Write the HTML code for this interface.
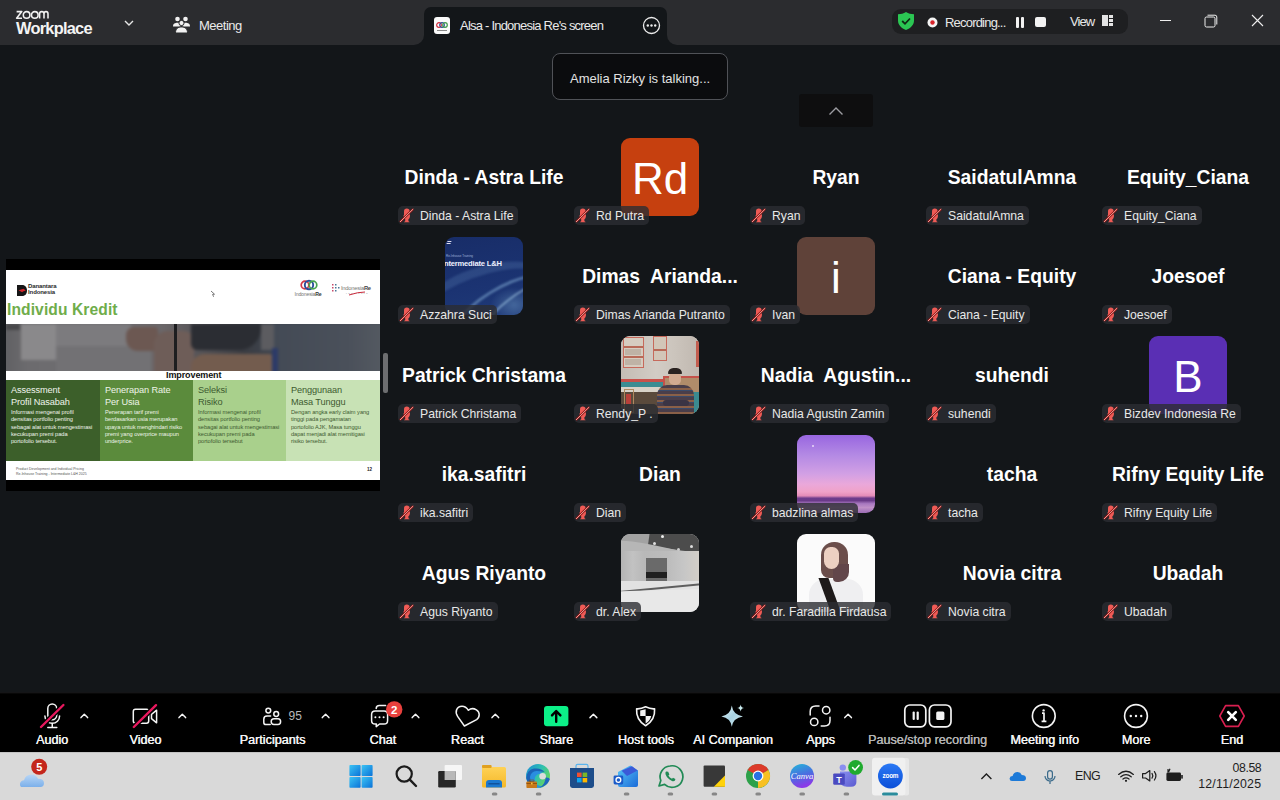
<!DOCTYPE html>
<html>
<head>
<meta charset="utf-8">
<style>
*{box-sizing:border-box;margin:0;padding:0}
html,body{width:1280px;height:800px;overflow:hidden;background:#131619;font-family:"Liberation Sans",sans-serif;color:#fff}
.a{position:absolute}
#title{left:0;top:0;width:1280px;height:45px;background:#2b2c2f}
#tab{left:424px;top:7px;width:243px;height:38px;background:#131619;border-radius:7px 7px 0 0}
#tabl{left:414px;top:35px;width:10px;height:10px;background:#131619}
#tabl:after{content:"";position:absolute;left:0;top:0;width:10px;height:10px;background:#2b2c2f;border-radius:0 0 10px 0}
#tabr{left:667px;top:35px;width:10px;height:10px;background:#131619}
#tabr:after{content:"";position:absolute;left:0;top:0;width:10px;height:10px;background:#2b2c2f;border-radius:0 0 0 10px}
#toolbar{left:0;top:692px;width:1280px;height:60px;background:linear-gradient(#151517 0,#151517 1px,#080808 1px,#080808 2px,#000 2px)}
#taskbar{left:0;top:752px;width:1280px;height:48px;background:#d9d9d9;border-top:1px solid #c4c4c4}
.tile{position:absolute;width:176px;height:99px}
.bn{position:absolute;left:0;width:176px;top:38.6px;text-align:center;font-weight:700;font-size:19.3px;line-height:22px;white-space:nowrap;color:#fff}
.av{position:absolute;left:49px;top:10px;width:78px;height:78px;border-radius:9px;overflow:hidden}
.chip{position:absolute;left:2px;top:78px;height:19px;border-radius:5px;background:rgba(44,45,50,0.8);padding:0 5px 0 22px;font-size:12.2px;line-height:21.5px;white-space:nowrap;color:#e8e8e8}
.chip svg{position:absolute;left:0;top:0}
.bx{white-space:nowrap}.bt{font-size:9.2px;line-height:11.5px;letter-spacing:-0.1px;margin-top:1px}.bb{font-size:5.7px;line-height:7.3px;margin-top:1px;letter-spacing:-0.05px}
.lt{text-align:center;font-size:44px;line-height:78px;padding-top:1.5px;color:#fff}.lt span{display:inline-block}
.lbl{position:absolute;top:733px;font-weight:400;font-size:12.6px;line-height:14px;white-space:nowrap;color:#f4f4f4;text-align:center;text-shadow:0.45px 0 0 currentColor}
</style>
</head>
<body>
<div id="title" class="a"></div>
<div id="tabl" class="a"></div>
<div id="tabr" class="a"></div>
<div id="tab" class="a"></div>
<svg class="a" style="left:15px;top:9px" width="34" height="11" viewBox="0 0 34 11"><g fill="none" stroke="#f2f2f2" stroke-width="1.55"><path d="M1.6 2.6 L6.8 2.6 L1.6 9.2 L7 9.2" stroke-linejoin="round"/><circle cx="11.6" cy="5.9" r="3.3"/><circle cx="19.8" cy="5.9" r="3.3"/><path d="M24.6 9.6 L24.6 4.8 Q24.6 2.6 26.8 2.6 Q29 2.6 29 4.8 L29 9.6 M29 4.8 Q29 2.6 31 2.6 Q33 2.6 33 4.8 L33 9.6"/></g></svg>
<div class="a" style="left:16px;top:18px;font-size:16.4px;font-weight:700;letter-spacing:-0.75px;line-height:20px;color:#f4f4f4">Workplace</div>
<svg class="a" style="left:123px;top:18px" width="12" height="10" viewBox="0 0 12 10"><path d="M2 3 L6 7 L10 3" fill="none" stroke="#e6e6e6" stroke-width="1.4"/></svg>
<svg class="a" style="left:172px;top:16px" width="19" height="18" viewBox="0 0 19 18"><circle cx="5.5" cy="3" r="2.3" fill="#f2f2f2"/><circle cx="13.5" cy="3" r="2.3" fill="#f2f2f2"/><path d="M1 10.5 C1 7.5 3 6.8 5.5 6.8 C7 6.8 8 7.2 8.5 7.8 L8.5 10.5 Z" fill="#f2f2f2"/><path d="M18 10.5 C18 7.5 16 6.8 13.5 6.8 C12 6.8 11 7.2 10.5 7.8 L10.5 10.5 Z" fill="#f2f2f2"/><circle cx="9.5" cy="7" r="2.6" fill="#f2f2f2" stroke="#2b2c2f" stroke-width="1"/><path d="M3.5 17 C3.5 12.5 6 11 9.5 11 C13 11 15.5 12.5 15.5 17 Z" fill="#f2f2f2" stroke="#2b2c2f" stroke-width="1"/></svg>
<div class="a" style="left:199px;top:18px;font-size:13px;letter-spacing:-0.5px;line-height:16px;color:#eaeaea">Meeting</div>
<svg class="a" style="left:434px;top:17px" width="16" height="17" viewBox="0 0 16 17"><rect x="0" y="0" width="16" height="17" rx="3" fill="#fafafa"/><circle cx="5" cy="8" r="2.3" fill="none" stroke="#d02a3a" stroke-width="1.2"/><circle cx="8" cy="8" r="2.3" fill="none" stroke="#2a4d9a" stroke-width="1.2"/><circle cx="11" cy="8" r="2.3" fill="none" stroke="#3f9a4a" stroke-width="1.2"/><rect x="3" y="13" width="10" height="1" fill="#888"/></svg>
<div class="a" style="left:460px;top:18px;font-size:13px;letter-spacing:-0.78px;line-height:16px;color:#eaeaea">Alsa - Indonesia Re's screen</div>
<svg class="a" style="left:642px;top:16px" width="19" height="19" viewBox="0 0 19 19"><circle cx="9.5" cy="9.5" r="8" fill="none" stroke="#ececec" stroke-width="1.3"/><circle cx="5.8" cy="9.5" r="1.2" fill="#ececec"/><circle cx="9.5" cy="9.5" r="1.2" fill="#ececec"/><circle cx="13.2" cy="9.5" r="1.2" fill="#ececec"/></svg>
<!-- recording pill -->
<div class="a" style="left:892px;top:9px;width:236px;height:25px;border-radius:9px;background:#1e1f21"></div>
<svg class="a" style="left:897px;top:11px" width="18" height="20" viewBox="0 0 18 20"><path d="M9 1 C11.5 2.6 14 3.2 17 3.3 L17 9.5 C17 14 13.5 17.2 9 19 C4.5 17.2 1 14 1 9.5 L1 3.3 C4 3.2 6.5 2.6 9 1 Z" fill="#2bc653"/><path d="M5.2 10 L8 12.8 L13 7.5" fill="none" stroke="#0f2a14" stroke-width="1.8"/></svg>
<svg class="a" style="left:927px;top:17px" width="11" height="11" viewBox="0 0 11 11"><circle cx="5.5" cy="5.5" r="5" fill="#f4f4f4"/><circle cx="5.5" cy="5.5" r="2.2" fill="#d8232a"/></svg>
<div class="a" style="left:945px;top:15px;font-size:13px;letter-spacing:-0.8px;line-height:16px;color:#e8e8e8">Recording...</div>
<div class="a" style="left:1016px;top:16.5px;width:3px;height:11px;background:#f2f2f2;border-radius:1px"></div>
<div class="a" style="left:1021px;top:16.5px;width:3px;height:11px;background:#f2f2f2;border-radius:1px"></div>
<div class="a" style="left:1035px;top:17px;width:11px;height:10px;background:#f2f2f2;border-radius:2px"></div>
<div class="a" style="left:1070px;top:14px;font-size:13px;letter-spacing:-0.9px;line-height:16px;color:#e8e8e8">View</div>
<div class="a" style="left:1102px;top:15px;width:6px;height:11px;background:#e4e4e4"></div>
<div class="a" style="left:1109px;top:15px;width:4px;height:3px;background:#e4e4e4"></div>
<div class="a" style="left:1109px;top:19px;width:4px;height:3px;background:#e4e4e4"></div>
<div class="a" style="left:1109px;top:23px;width:4px;height:3px;background:#e4e4e4"></div>
<!-- window controls -->
<div class="a" style="left:1160px;top:20px;width:11px;height:1.2px;background:#efefef"></div>
<svg class="a" style="left:1204px;top:14px" width="14" height="14" viewBox="0 0 14 14"><rect x="1" y="3" width="10" height="10" rx="1.5" fill="none" stroke="#efefef" stroke-width="1"/><path d="M3.5 1.2 L11 1.2 Q12.8 1.2 12.8 3 L12.8 10.5" fill="none" stroke="#efefef" stroke-width="1"/></svg>
<svg class="a" style="left:1251px;top:14px" width="13" height="13" viewBox="0 0 13 13"><path d="M1 1 L12 12 M12 1 L1 12" stroke="#efefef" stroke-width="1.1"/></svg>
<!-- talking tooltip -->
<div class="a" style="left:552px;top:53px;width:176px;height:47px;border-radius:8px;background:#0b0c0e;border:1px solid #505257"></div>
<div class="a" style="left:570px;top:70.8px;font-size:13px;line-height:16px;color:#e2e2e2;letter-spacing:0px">Amelia Rizky is talking...</div>
<!-- up button -->
<div class="a" style="left:799px;top:94px;width:74px;height:33px;border-radius:3px;background:#0e0e0f"></div>
<svg class="a" style="left:828px;top:105px" width="16" height="12" viewBox="0 0 16 12"><path d="M1.5 9.5 L8 3 L14.5 9.5" fill="none" stroke="#9d9da2" stroke-width="1.4"/></svg>
<div class="a" style="left:6px;top:259px;width:374px;height:232px;background:#000"></div>
<div class="a" style="left:6px;top:270px;width:374px;height:210px;background:#fff;overflow:hidden">
 <!-- header logos -->
 <svg class="a" style="left:11px;top:15px" width="10" height="11" viewBox="0 0 10 11"><path d="M0 0 L5 0 C8.5 0 10 2.5 10 5.5 C10 8.5 8.5 11 5 11 L0 11 Z" fill="#161616"/><path d="M1.5 5.2 L6.5 3.8 L8.8 5.4 L6 6.4 L5.2 7.2 Z" fill="#d3242a"/></svg>
 <div class="a" style="left:22px;top:14px;font-size:6px;line-height:5.8px;font-weight:700;color:#2a2a2a;letter-spacing:-0.1px">Danantara<br>Indonesia</div>
 <div class="a" style="left:1px;top:31px;font-size:15.6px;line-height:18px;font-weight:700;color:#6fad4b;letter-spacing:0.1px">Individu Kredit</div>
 <svg class="a" style="left:204px;top:20px" width="6" height="8" viewBox="0 0 6 8"><path d="M1 1 L4.5 4.2 L2.6 4.4 L3.6 6.8" fill="none" stroke="#555" stroke-width="0.8"/></svg>
 <svg class="a" style="left:286px;top:9px" width="36" height="20" viewBox="0 0 36 20"><circle cx="13" cy="6" r="3.8" fill="none" stroke="#d23a4a" stroke-width="1.7"/><circle cx="17" cy="6" r="4.2" fill="none" stroke="#2a4d9a" stroke-width="1.9"/><circle cx="21" cy="6" r="3.8" fill="none" stroke="#4aa34f" stroke-width="1.7"/><text x="2.5" y="17" font-size="5.2" font-family="Liberation Sans" fill="#777" letter-spacing="-0.2">Indonesia<tspan font-weight="700" fill="#333">Re</tspan></text></svg>
 <svg class="a" style="left:326px;top:13px" width="44" height="16" viewBox="0 0 44 16"><g fill="#c84a6a"><rect x="0" y="1" width="1.5" height="1.5"/><rect x="0" y="4" width="1.5" height="1.5"/><rect x="0" y="7" width="1.5" height="1.5"/></g><g fill="#4a7a9a"><rect x="3" y="1" width="1.5" height="1.5"/><rect x="3" y="4" width="1.5" height="1.5"/><rect x="3" y="7" width="1.5" height="1.5"/><rect x="6" y="4" width="1.5" height="1.5"/></g><text x="9" y="7" font-size="5.8" font-family="Liberation Sans" fill="#777" letter-spacing="-0.25">Indonesia<tspan font-weight="700" fill="#444">Re</tspan></text><text x="14" y="10.5" font-size="2.5" font-family="Liberation Sans" fill="#777" letter-spacing="1.6">Institute</text><path d="M17 12 Q26 9 33 9" stroke="#c8283a" stroke-width="1" fill="none"/></svg>
 <!-- photo -->
 <div class="a" style="left:0;top:54px;width:374px;height:47px;overflow:hidden;background:#5a5a5d">
  <div class="a" style="left:-10px;top:-10px;width:400px;height:70px;filter:blur(1.8px)">
   <div class="a" style="left:0;top:0;width:400px;height:70px;background:linear-gradient(90deg,#5c5c5f 0%,#6c6b6e 8%,#6e6d70 30%,#6a6668 42%,#3a3c42 62%,#3e4550 70%,#444a54 90%,#50565e 100%)"></div>
   <div class="a" style="left:10px;top:10px;width:14px;height:6px;background:#48484a"></div>
   <div class="a" style="left:25px;top:10px;width:35px;height:36px;background:#8a898b"></div>
   <div class="a" style="left:60px;top:10px;width:75px;height:22px;background:#7c7b7e"></div>
   <div class="a" style="left:60px;top:32px;width:95px;height:38px;background:#727174"></div>
   <div class="a" style="left:130px;top:13px;width:32px;height:24px;border-radius:8px 4px 4px 12px;background:#6c5852"></div>
   <div class="a" style="left:158px;top:17px;width:40px;height:53px;border-radius:14px 10px 0 0;background:#6e5d58"></div>
   <div class="a" style="left:195px;top:10px;width:70px;height:26px;border-radius:0 0 22px 6px;background:#2b2d33"></div>
   <div class="a" style="left:265px;top:10px;width:14px;height:26px;background:#5c5c60"></div>
   <div class="a" style="left:195px;top:40px;width:82px;height:30px;border-radius:14px 4px 0 0;background:#735c4e"></div>
   <div class="a" style="left:278px;top:10px;width:122px;height:60px;background:linear-gradient(90deg,#434a55 0%,#4a505a 60%,#585d64 100%)"></div>
   <div class="a" style="left:276px;top:34px;width:6px;height:36px;background:#2c3a68"></div>
  </div>
  <div class="a" style="left:168px;top:0;width:3px;height:47px;background:#1e1e20;filter:blur(0.4px)"></div>
 </div>
 <!-- improvement -->
 <div class="a" style="left:160px;top:100px;font-size:9px;line-height:11px;font-weight:700;color:#111;letter-spacing:-0.1px">Improvement</div>
 <div class="a" style="left:0;top:110px;width:94px;height:81px;background:#3c5f2a"></div>
 <div class="a" style="left:94px;top:110px;width:93px;height:81px;background:#5b8b3c"></div>
 <div class="a" style="left:187px;top:110px;width:93px;height:81px;background:#a9d08c"></div>
 <div class="a" style="left:280px;top:110px;width:94px;height:81px;background:#c8e2b5"></div>
 <div class="a bx" style="left:5px;top:114px;color:#f0f4ec"><div class="bt">Assessment<br>Profil Nasabah</div><div class="bb">Informasi mengenai profil<br>densitas portfolio penting<br>sebagai alat untuk mengestimasi<br>kecukupan premi pada<br>portofolio tersebut.</div></div>
 <div class="a bx" style="left:99px;top:114px;color:#eef4e8"><div class="bt">Penerapan Rate<br>Per Usia</div><div class="bb">Penerapan tarif premi<br>berdasarkan usia merupakan<br>upaya untuk menghindari risiko<br>premi yang overprice maupun<br>underprice.</div></div>
 <div class="a bx" style="left:192px;top:114px;color:#3d5a30"><div class="bt">Seleksi<br>Risiko</div><div class="bb">Informasi mengenai profil<br>densitas portfolio penting<br>sebagai alat untuk mengestimasi<br>kecukupan premi pada<br>portofolio tersebut</div></div>
 <div class="a bx" style="left:285px;top:114px;color:#3d5a30"><div class="bt">Penggunaan<br>Masa Tunggu</div><div class="bb">Dengan angka early claim yang<br>tinggi pada pengamatan<br>portofolio AJK, Masa tunggu<br>dapat menjadi alat memitigasi<br>risiko tersebut.</div></div>
 <div class="a" style="left:10px;top:197px;font-size:3.5px;line-height:4.5px;color:#555">Product Development and Individual Pricing<br>Re-Inhouse Training - Intermediate L&amp;H 2025</div>
 <div class="a" style="left:361px;top:197px;font-size:4.5px;line-height:5px;color:#222;font-weight:700">12</div>
</div>
<div class="a" style="left:383px;top:353px;width:5px;height:40px;border-radius:2px;background:#6d6e70"></div>
<!--GRID-->
<div class="tile" style="left:396px;top:128px"><div class="bn">Dinda - Astra Life</div><div class="chip"><svg width="18" height="19" viewBox="0 0 18 19"><rect x="6" y="2.6" width="5.6" height="8.6" rx="2.8" fill="#ef5b56"/><path d="M5.6 9 Q5.6 12.6 7.2 13.2 L7.2 15.2 Q6 15.6 6 16.2 L11.6 16.2 Q11.6 15.6 10.4 15.2 L10.4 13.2 Q12 12.6 12 9 Z" fill="#ef5b56"/><path d="M2 16 L15.2 3" stroke="#8e1616" stroke-width="2.3"/><path d="M2 16 L15.2 3" stroke="#f7b0a8" stroke-width="0.9"/></svg>Dinda - Astra Life</div></div>
<div class="tile" style="left:572px;top:128px"><div class="av lt" style="background:#c6400f"><span>Rd</span></div><div class="chip"><svg width="18" height="19" viewBox="0 0 18 19"><rect x="6" y="2.6" width="5.6" height="8.6" rx="2.8" fill="#ef5b56"/><path d="M5.6 9 Q5.6 12.6 7.2 13.2 L7.2 15.2 Q6 15.6 6 16.2 L11.6 16.2 Q11.6 15.6 10.4 15.2 L10.4 13.2 Q12 12.6 12 9 Z" fill="#ef5b56"/><path d="M2 16 L15.2 3" stroke="#8e1616" stroke-width="2.3"/><path d="M2 16 L15.2 3" stroke="#f7b0a8" stroke-width="0.9"/></svg>Rd Putra</div></div>
<div class="tile" style="left:748px;top:128px"><div class="bn">Ryan</div><div class="chip"><svg width="18" height="19" viewBox="0 0 18 19"><rect x="6" y="2.6" width="5.6" height="8.6" rx="2.8" fill="#ef5b56"/><path d="M5.6 9 Q5.6 12.6 7.2 13.2 L7.2 15.2 Q6 15.6 6 16.2 L11.6 16.2 Q11.6 15.6 10.4 15.2 L10.4 13.2 Q12 12.6 12 9 Z" fill="#ef5b56"/><path d="M2 16 L15.2 3" stroke="#8e1616" stroke-width="2.3"/><path d="M2 16 L15.2 3" stroke="#f7b0a8" stroke-width="0.9"/></svg>Ryan</div></div>
<div class="tile" style="left:924px;top:128px"><div class="bn">SaidatulAmna</div><div class="chip"><svg width="18" height="19" viewBox="0 0 18 19"><rect x="6" y="2.6" width="5.6" height="8.6" rx="2.8" fill="#ef5b56"/><path d="M5.6 9 Q5.6 12.6 7.2 13.2 L7.2 15.2 Q6 15.6 6 16.2 L11.6 16.2 Q11.6 15.6 10.4 15.2 L10.4 13.2 Q12 12.6 12 9 Z" fill="#ef5b56"/><path d="M2 16 L15.2 3" stroke="#8e1616" stroke-width="2.3"/><path d="M2 16 L15.2 3" stroke="#f7b0a8" stroke-width="0.9"/></svg>SaidatulAmna</div></div>
<div class="tile" style="left:1100px;top:128px"><div class="bn">Equity_Ciana</div><div class="chip"><svg width="18" height="19" viewBox="0 0 18 19"><rect x="6" y="2.6" width="5.6" height="8.6" rx="2.8" fill="#ef5b56"/><path d="M5.6 9 Q5.6 12.6 7.2 13.2 L7.2 15.2 Q6 15.6 6 16.2 L11.6 16.2 Q11.6 15.6 10.4 15.2 L10.4 13.2 Q12 12.6 12 9 Z" fill="#ef5b56"/><path d="M2 16 L15.2 3" stroke="#8e1616" stroke-width="2.3"/><path d="M2 16 L15.2 3" stroke="#f7b0a8" stroke-width="0.9"/></svg>Equity_Ciana</div></div>
<div class="tile" style="left:396px;top:227px"><div class="av" style="background:linear-gradient(170deg,#182d68 0%,#1b3372 60%,#1f3a78 100%)"><div class="a" style="left:0;top:0;width:78px;height:78px;filter:blur(0.8px)"><div class="a" style="left:-40px;top:30px;width:160px;height:90px;border-radius:50%;border-top:9px solid rgba(110,150,200,.22);transform:rotate(-20deg)"></div><div class="a" style="left:-5px;top:50px;width:130px;height:60px;border-radius:50%;border-top:3px solid rgba(150,195,230,.45);transform:rotate(-32deg)"></div><div class="a" style="left:25px;top:58px;width:100px;height:40px;border-radius:50%;border-top:2px solid rgba(190,225,245,.55);transform:rotate(-38deg)"></div><div class="a" style="left:45px;top:50px;width:40px;height:30px;background:radial-gradient(ellipse at 60% 60%,rgba(140,190,225,.35),rgba(140,190,225,0) 70%)"></div></div><div class="a" style="left:1px;top:17px;font-size:3px;color:#9fb0d8;white-space:nowrap">Re-Inhouse Training</div><div class="a" style="left:-1px;top:22px;font-size:7.6px;font-weight:700;color:#eef2ff;white-space:nowrap;letter-spacing:-0.2px">ntermediate L&amp;H</div><div class="a" style="left:2px;top:4px;width:4px;height:3px;border-top:1px solid #dde;border-bottom:1px solid #dde;transform:skewX(-20deg)"></div></div><div class="chip"><svg width="18" height="19" viewBox="0 0 18 19"><rect x="6" y="2.6" width="5.6" height="8.6" rx="2.8" fill="#ef5b56"/><path d="M5.6 9 Q5.6 12.6 7.2 13.2 L7.2 15.2 Q6 15.6 6 16.2 L11.6 16.2 Q11.6 15.6 10.4 15.2 L10.4 13.2 Q12 12.6 12 9 Z" fill="#ef5b56"/><path d="M2 16 L15.2 3" stroke="#8e1616" stroke-width="2.3"/><path d="M2 16 L15.2 3" stroke="#f7b0a8" stroke-width="0.9"/></svg>Azzahra Suci</div></div>
<div class="tile" style="left:572px;top:227px"><div class="bn">Dimas&nbsp; Arianda...</div><div class="chip"><svg width="18" height="19" viewBox="0 0 18 19"><rect x="6" y="2.6" width="5.6" height="8.6" rx="2.8" fill="#ef5b56"/><path d="M5.6 9 Q5.6 12.6 7.2 13.2 L7.2 15.2 Q6 15.6 6 16.2 L11.6 16.2 Q11.6 15.6 10.4 15.2 L10.4 13.2 Q12 12.6 12 9 Z" fill="#ef5b56"/><path d="M2 16 L15.2 3" stroke="#8e1616" stroke-width="2.3"/><path d="M2 16 L15.2 3" stroke="#f7b0a8" stroke-width="0.9"/></svg>Dimas Arianda Putranto</div></div>
<div class="tile" style="left:748px;top:227px"><div class="av lt" style="background:#5f4239"><span>i</span></div><div class="chip"><svg width="18" height="19" viewBox="0 0 18 19"><rect x="6" y="2.6" width="5.6" height="8.6" rx="2.8" fill="#ef5b56"/><path d="M5.6 9 Q5.6 12.6 7.2 13.2 L7.2 15.2 Q6 15.6 6 16.2 L11.6 16.2 Q11.6 15.6 10.4 15.2 L10.4 13.2 Q12 12.6 12 9 Z" fill="#ef5b56"/><path d="M2 16 L15.2 3" stroke="#8e1616" stroke-width="2.3"/><path d="M2 16 L15.2 3" stroke="#f7b0a8" stroke-width="0.9"/></svg>Ivan</div></div>
<div class="tile" style="left:924px;top:227px"><div class="bn">Ciana - Equity</div><div class="chip"><svg width="18" height="19" viewBox="0 0 18 19"><rect x="6" y="2.6" width="5.6" height="8.6" rx="2.8" fill="#ef5b56"/><path d="M5.6 9 Q5.6 12.6 7.2 13.2 L7.2 15.2 Q6 15.6 6 16.2 L11.6 16.2 Q11.6 15.6 10.4 15.2 L10.4 13.2 Q12 12.6 12 9 Z" fill="#ef5b56"/><path d="M2 16 L15.2 3" stroke="#8e1616" stroke-width="2.3"/><path d="M2 16 L15.2 3" stroke="#f7b0a8" stroke-width="0.9"/></svg>Ciana - Equity</div></div>
<div class="tile" style="left:1100px;top:227px"><div class="bn">Joesoef</div><div class="chip"><svg width="18" height="19" viewBox="0 0 18 19"><rect x="6" y="2.6" width="5.6" height="8.6" rx="2.8" fill="#ef5b56"/><path d="M5.6 9 Q5.6 12.6 7.2 13.2 L7.2 15.2 Q6 15.6 6 16.2 L11.6 16.2 Q11.6 15.6 10.4 15.2 L10.4 13.2 Q12 12.6 12 9 Z" fill="#ef5b56"/><path d="M2 16 L15.2 3" stroke="#8e1616" stroke-width="2.3"/><path d="M2 16 L15.2 3" stroke="#f7b0a8" stroke-width="0.9"/></svg>Joesoef</div></div>
<div class="tile" style="left:396px;top:326px"><div class="bn">Patrick Christama</div><div class="chip"><svg width="18" height="19" viewBox="0 0 18 19"><rect x="6" y="2.6" width="5.6" height="8.6" rx="2.8" fill="#ef5b56"/><path d="M5.6 9 Q5.6 12.6 7.2 13.2 L7.2 15.2 Q6 15.6 6 16.2 L11.6 16.2 Q11.6 15.6 10.4 15.2 L10.4 13.2 Q12 12.6 12 9 Z" fill="#ef5b56"/><path d="M2 16 L15.2 3" stroke="#8e1616" stroke-width="2.3"/><path d="M2 16 L15.2 3" stroke="#f7b0a8" stroke-width="0.9"/></svg>Patrick Christama</div></div>
<div class="tile" style="left:572px;top:326px"><div class="av" style="background:#cdc6be"><div class="a" style="left:0;top:0;width:78px;height:78px;filter:blur(0.5px)"><div class="a" style="left:0;top:0;width:78px;height:46px;background:linear-gradient(90deg,#c4bcb4,#d2ccc5 45%,#cbc4bc 70%,#c0b8b0)"></div><div class="a" style="left:2px;top:1px;width:21px;height:31px;border:1.5px solid #c66a5c;background:#d6ccc0"></div><div class="a" style="left:3px;top:10px;width:19px;height:1.5px;background:#b86a58"></div><div class="a" style="left:3px;top:20px;width:19px;height:1.5px;background:#b86a58"></div><div class="a" style="left:4px;top:13px;width:16px;height:6px;background:#a89a8c;opacity:.5"></div><div class="a" style="left:4px;top:23px;width:16px;height:6px;background:#a89a8c;opacity:.5"></div><div class="a" style="left:32px;top:0;width:14px;height:25px;border:1.5px solid #c66a5c;background:#d2c6b8"></div><div class="a" style="left:33px;top:13px;width:12px;height:1.5px;background:#b86a58"></div><div class="a" style="left:75px;top:5px;width:3px;height:26px;background:#c25c4e"></div><div class="a" style="left:0;top:43px;width:42px;height:3px;background:#c8504a"></div><div class="a" style="left:0;top:46px;width:42px;height:5px;background:#3b8c92"></div><div class="a" style="left:0;top:51px;width:42px;height:5px;background:#d8d2c8"></div><div class="a" style="left:0;top:56px;width:42px;height:22px;background:#5a4a3c"></div><div class="a" style="left:3px;top:53px;width:10px;height:24px;border:1.5px solid #b08a60"></div><div class="a" style="left:5px;top:58px;width:5px;height:10px;background:#b8403a"></div><div class="a" style="left:42px;top:40px;width:36px;height:22px;background:#b08c6a;border-top:2px solid #c4524a;border-left:2px solid #c4524a"></div><div class="a" style="left:72px;top:56px;width:6px;height:22px;background:#3a8a90"></div><div class="a" style="left:48px;top:35px;width:12px;height:14px;border-radius:6px 6px 5px 5px;background:#d2aa90"></div><div class="a" style="left:47px;top:32px;width:14px;height:6px;border-radius:7px 7px 1px 1px;background:#2a2220"></div><div class="a" style="left:36px;top:49px;width:37px;height:29px;border-radius:10px 10px 0 0;background:repeating-linear-gradient(180deg,#4a3e4a 0,#4a3e4a 3px,#8a6048 3px,#8a6048 4.5px,#3a4a6a 4.5px,#3a4a6a 6px)"></div><div class="a" style="left:42px;top:64px;width:26px;height:6px;border-radius:3px;background:#3a3444"></div></div></div><div class="chip"><svg width="18" height="19" viewBox="0 0 18 19"><rect x="6" y="2.6" width="5.6" height="8.6" rx="2.8" fill="#ef5b56"/><path d="M5.6 9 Q5.6 12.6 7.2 13.2 L7.2 15.2 Q6 15.6 6 16.2 L11.6 16.2 Q11.6 15.6 10.4 15.2 L10.4 13.2 Q12 12.6 12 9 Z" fill="#ef5b56"/><path d="M2 16 L15.2 3" stroke="#8e1616" stroke-width="2.3"/><path d="M2 16 L15.2 3" stroke="#f7b0a8" stroke-width="0.9"/></svg>Rendy_P .</div></div>
<div class="tile" style="left:748px;top:326px"><div class="bn">Nadia&nbsp; Agustin...</div><div class="chip"><svg width="18" height="19" viewBox="0 0 18 19"><rect x="6" y="2.6" width="5.6" height="8.6" rx="2.8" fill="#ef5b56"/><path d="M5.6 9 Q5.6 12.6 7.2 13.2 L7.2 15.2 Q6 15.6 6 16.2 L11.6 16.2 Q11.6 15.6 10.4 15.2 L10.4 13.2 Q12 12.6 12 9 Z" fill="#ef5b56"/><path d="M2 16 L15.2 3" stroke="#8e1616" stroke-width="2.3"/><path d="M2 16 L15.2 3" stroke="#f7b0a8" stroke-width="0.9"/></svg>Nadia Agustin Zamin</div></div>
<div class="tile" style="left:924px;top:326px"><div class="bn">suhendi</div><div class="chip"><svg width="18" height="19" viewBox="0 0 18 19"><rect x="6" y="2.6" width="5.6" height="8.6" rx="2.8" fill="#ef5b56"/><path d="M5.6 9 Q5.6 12.6 7.2 13.2 L7.2 15.2 Q6 15.6 6 16.2 L11.6 16.2 Q11.6 15.6 10.4 15.2 L10.4 13.2 Q12 12.6 12 9 Z" fill="#ef5b56"/><path d="M2 16 L15.2 3" stroke="#8e1616" stroke-width="2.3"/><path d="M2 16 L15.2 3" stroke="#f7b0a8" stroke-width="0.9"/></svg>suhendi</div></div>
<div class="tile" style="left:1100px;top:326px"><div class="av lt" style="background:#5a2fb4"><span>B</span></div><div class="chip"><svg width="18" height="19" viewBox="0 0 18 19"><rect x="6" y="2.6" width="5.6" height="8.6" rx="2.8" fill="#ef5b56"/><path d="M5.6 9 Q5.6 12.6 7.2 13.2 L7.2 15.2 Q6 15.6 6 16.2 L11.6 16.2 Q11.6 15.6 10.4 15.2 L10.4 13.2 Q12 12.6 12 9 Z" fill="#ef5b56"/><path d="M2 16 L15.2 3" stroke="#8e1616" stroke-width="2.3"/><path d="M2 16 L15.2 3" stroke="#f7b0a8" stroke-width="0.9"/></svg>Bizdev Indonesia Re</div></div>
<div class="tile" style="left:396px;top:425px"><div class="bn">ika.safitri</div><div class="chip"><svg width="18" height="19" viewBox="0 0 18 19"><rect x="6" y="2.6" width="5.6" height="8.6" rx="2.8" fill="#ef5b56"/><path d="M5.6 9 Q5.6 12.6 7.2 13.2 L7.2 15.2 Q6 15.6 6 16.2 L11.6 16.2 Q11.6 15.6 10.4 15.2 L10.4 13.2 Q12 12.6 12 9 Z" fill="#ef5b56"/><path d="M2 16 L15.2 3" stroke="#8e1616" stroke-width="2.3"/><path d="M2 16 L15.2 3" stroke="#f7b0a8" stroke-width="0.9"/></svg>ika.safitri</div></div>
<div class="tile" style="left:572px;top:425px"><div class="bn">Dian</div><div class="chip"><svg width="18" height="19" viewBox="0 0 18 19"><rect x="6" y="2.6" width="5.6" height="8.6" rx="2.8" fill="#ef5b56"/><path d="M5.6 9 Q5.6 12.6 7.2 13.2 L7.2 15.2 Q6 15.6 6 16.2 L11.6 16.2 Q11.6 15.6 10.4 15.2 L10.4 13.2 Q12 12.6 12 9 Z" fill="#ef5b56"/><path d="M2 16 L15.2 3" stroke="#8e1616" stroke-width="2.3"/><path d="M2 16 L15.2 3" stroke="#f7b0a8" stroke-width="0.9"/></svg>Dian</div></div>
<div class="tile" style="left:748px;top:425px"><div class="av" style="background:linear-gradient(180deg,#9866e0 0%,#b48ae4 26%,#d2a0e4 50%,#eaa8da 63%,#f0a2c8 73%,#e48cb8 78%,#6e3c8c 81%,#6a3a88 84%,#a878c0 88%,#c090c8 93%,#9a6cb4 100%)"><div class="a" style="left:15px;top:10px;width:2px;height:2px;border-radius:1px;background:#e8d8f8"></div></div><div class="chip"><svg width="18" height="19" viewBox="0 0 18 19"><rect x="6" y="2.6" width="5.6" height="8.6" rx="2.8" fill="#ef5b56"/><path d="M5.6 9 Q5.6 12.6 7.2 13.2 L7.2 15.2 Q6 15.6 6 16.2 L11.6 16.2 Q11.6 15.6 10.4 15.2 L10.4 13.2 Q12 12.6 12 9 Z" fill="#ef5b56"/><path d="M2 16 L15.2 3" stroke="#8e1616" stroke-width="2.3"/><path d="M2 16 L15.2 3" stroke="#f7b0a8" stroke-width="0.9"/></svg>badzlina almas</div></div>
<div class="tile" style="left:924px;top:425px"><div class="bn">tacha</div><div class="chip"><svg width="18" height="19" viewBox="0 0 18 19"><rect x="6" y="2.6" width="5.6" height="8.6" rx="2.8" fill="#ef5b56"/><path d="M5.6 9 Q5.6 12.6 7.2 13.2 L7.2 15.2 Q6 15.6 6 16.2 L11.6 16.2 Q11.6 15.6 10.4 15.2 L10.4 13.2 Q12 12.6 12 9 Z" fill="#ef5b56"/><path d="M2 16 L15.2 3" stroke="#8e1616" stroke-width="2.3"/><path d="M2 16 L15.2 3" stroke="#f7b0a8" stroke-width="0.9"/></svg>tacha</div></div>
<div class="tile" style="left:1100px;top:425px"><div class="bn">Rifny Equity Life</div><div class="chip"><svg width="18" height="19" viewBox="0 0 18 19"><rect x="6" y="2.6" width="5.6" height="8.6" rx="2.8" fill="#ef5b56"/><path d="M5.6 9 Q5.6 12.6 7.2 13.2 L7.2 15.2 Q6 15.6 6 16.2 L11.6 16.2 Q11.6 15.6 10.4 15.2 L10.4 13.2 Q12 12.6 12 9 Z" fill="#ef5b56"/><path d="M2 16 L15.2 3" stroke="#8e1616" stroke-width="2.3"/><path d="M2 16 L15.2 3" stroke="#f7b0a8" stroke-width="0.9"/></svg>Rifny Equity Life</div></div>
<div class="tile" style="left:396px;top:524px"><div class="bn">Agus Riyanto</div><div class="chip"><svg width="18" height="19" viewBox="0 0 18 19"><rect x="6" y="2.6" width="5.6" height="8.6" rx="2.8" fill="#ef5b56"/><path d="M5.6 9 Q5.6 12.6 7.2 13.2 L7.2 15.2 Q6 15.6 6 16.2 L11.6 16.2 Q11.6 15.6 10.4 15.2 L10.4 13.2 Q12 12.6 12 9 Z" fill="#ef5b56"/><path d="M2 16 L15.2 3" stroke="#8e1616" stroke-width="2.3"/><path d="M2 16 L15.2 3" stroke="#f7b0a8" stroke-width="0.9"/></svg>Agus Riyanto</div></div>
<div class="tile" style="left:572px;top:524px"><div class="av" style="background:#d8d8d8"><div class="a" style="left:0;top:0;width:78px;height:78px;filter:blur(0.6px)"><div class="a" style="left:0;top:0;width:78px;height:30px;background:#a2a2a2"></div><div class="a" style="left:28px;top:-4px;width:60px;height:20px;background:#4c4c4c;transform:rotate(8deg)"></div><div class="a" style="left:-6px;top:3px;width:100px;height:14px;border-radius:40% 10% 0 0;background:#b6b6b6;transform:rotate(12deg);transform-origin:0 0"></div><div class="a" style="left:0;top:17px;width:78px;height:31px;background:linear-gradient(90deg,#b4b4b4 0%,#c2c2c2 15%,#b8b8b8 30%,#bcbcbc 60%,#c6c6c6 80%,#d2cec8 100%)"></div><div class="a" style="left:25px;top:24px;width:21px;height:23px;background:#6a6a6a"></div><div class="a" style="left:25px;top:38px;width:21px;height:6px;background:#202020"></div><div class="a" style="left:0;top:47px;width:78px;height:31px;background:#e2e2e2"></div><div class="a" style="left:-2px;top:53px;width:84px;height:1.6px;background:#5e5e5e;transform:rotate(-5.5deg)"></div><div class="a" style="left:0;top:55px;width:78px;height:23px;background:#e8e8e8;clip-path:polygon(0 10%,100% 0,100% 100%,0 100%)"></div><div class="a" style="left:40px;top:1px;width:3px;height:3px;border-radius:2px;background:#eee"></div><div class="a" style="left:32px;top:8px;width:3px;height:3px;border-radius:2px;background:#ddd"></div><div class="a" style="left:69px;top:11px;width:3px;height:3px;border-radius:2px;background:#ddd"></div><div class="a" style="left:56px;top:14px;width:3px;height:3px;border-radius:2px;background:#ccc"></div></div></div><div class="chip"><svg width="18" height="19" viewBox="0 0 18 19"><rect x="6" y="2.6" width="5.6" height="8.6" rx="2.8" fill="#ef5b56"/><path d="M5.6 9 Q5.6 12.6 7.2 13.2 L7.2 15.2 Q6 15.6 6 16.2 L11.6 16.2 Q11.6 15.6 10.4 15.2 L10.4 13.2 Q12 12.6 12 9 Z" fill="#ef5b56"/><path d="M2 16 L15.2 3" stroke="#8e1616" stroke-width="2.3"/><path d="M2 16 L15.2 3" stroke="#f7b0a8" stroke-width="0.9"/></svg>dr. Alex</div></div>
<div class="tile" style="left:748px;top:524px"><div class="av" style="background:#fbfbfb"><div class="a" style="left:12px;top:45px;width:54px;height:40px;border-radius:16px 16px 0 0;background:#efeff1"></div><div class="a" style="left:24px;top:8px;width:27px;height:36px;border-radius:13px 13px 12px 8px;background:#6b4e4b"></div><div class="a" style="left:36px;top:30px;width:16px;height:18px;border-radius:0 0 10px 4px;background:#62464a"></div><div class="a" style="left:27px;top:13px;width:15px;height:22px;border-radius:7px 7px 8px 8px;background:#ecd0c2"></div><div class="a" style="left:28px;top:44px;width:10px;height:36px;background:#1e1a1a;transform:skewX(20deg)"></div></div><div class="chip"><svg width="18" height="19" viewBox="0 0 18 19"><rect x="6" y="2.6" width="5.6" height="8.6" rx="2.8" fill="#ef5b56"/><path d="M5.6 9 Q5.6 12.6 7.2 13.2 L7.2 15.2 Q6 15.6 6 16.2 L11.6 16.2 Q11.6 15.6 10.4 15.2 L10.4 13.2 Q12 12.6 12 9 Z" fill="#ef5b56"/><path d="M2 16 L15.2 3" stroke="#8e1616" stroke-width="2.3"/><path d="M2 16 L15.2 3" stroke="#f7b0a8" stroke-width="0.9"/></svg>dr. Faradilla Firdausa</div></div>
<div class="tile" style="left:924px;top:524px"><div class="bn">Novia citra</div><div class="chip"><svg width="18" height="19" viewBox="0 0 18 19"><rect x="6" y="2.6" width="5.6" height="8.6" rx="2.8" fill="#ef5b56"/><path d="M5.6 9 Q5.6 12.6 7.2 13.2 L7.2 15.2 Q6 15.6 6 16.2 L11.6 16.2 Q11.6 15.6 10.4 15.2 L10.4 13.2 Q12 12.6 12 9 Z" fill="#ef5b56"/><path d="M2 16 L15.2 3" stroke="#8e1616" stroke-width="2.3"/><path d="M2 16 L15.2 3" stroke="#f7b0a8" stroke-width="0.9"/></svg>Novia citra</div></div>
<div class="tile" style="left:1100px;top:524px"><div class="bn">Ubadah</div><div class="chip"><svg width="18" height="19" viewBox="0 0 18 19"><rect x="6" y="2.6" width="5.6" height="8.6" rx="2.8" fill="#ef5b56"/><path d="M5.6 9 Q5.6 12.6 7.2 13.2 L7.2 15.2 Q6 15.6 6 16.2 L11.6 16.2 Q11.6 15.6 10.4 15.2 L10.4 13.2 Q12 12.6 12 9 Z" fill="#ef5b56"/><path d="M2 16 L15.2 3" stroke="#8e1616" stroke-width="2.3"/><path d="M2 16 L15.2 3" stroke="#f7b0a8" stroke-width="0.9"/></svg>Ubadah</div></div>
<!--/GRID-->
<div id="toolbar" class="a"></div>
<svg class="a" style="left:0;top:693px" width="1280" height="59" viewBox="0 693 1280 59">
 <g fill="none" stroke="#f4f4f4" stroke-width="1.5" stroke-linecap="round" stroke-linejoin="round">
  <!-- audio mic -->
  <path d="M47.8 708.5 A4.45 4.45 0 0 1 56.7 708.5 L56.7 715.3 A4.45 4.45 0 0 1 47.8 715.3 Z"/>
  <path d="M44.9 716 A7.35 7.35 0 0 0 59.6 716"/>
  <path d="M52.25 723.4 L52.25 727.4 M47.8 727.5 L56.8 727.5"/>
  <!-- chevrons -->
  <path d="M81 717.6 L84.3 714.2 L87.6 717.6"/>
  <path d="M179 717.6 L182.3 714.2 L185.6 717.6"/>
  <path d="M322.3 717.6 L325.6 714.2 L328.9 717.6"/>
  <path d="M412.2 717.6 L415.5 714.2 L418.8 717.6"/>
  <path d="M492 717.6 L495.3 714.2 L498.6 717.6"/>
  <path d="M590 717.6 L593.4 714.2 L596.8 717.6"/>
  <path d="M844.8 717.6 L848.1 714.2 L851.4 717.6"/>
  <!-- video -->
  <path d="M135.5 709.3 L146.5 709.3 Q148.7 709.3 148.7 711.5 L148.7 721 Q148.7 723.2 146.5 723.2 L135.5 723.2 Q133.3 723.2 133.3 721 L133.3 711.5 Q133.3 709.3 135.5 709.3 Z"/>
  <path d="M156.6 710.2 L156.6 722.8 L151.5 718.6 L151.5 714.4 Z"/>
  <!-- participants -->
  <circle cx="268.3" cy="710.6" r="2.4"/>
  <circle cx="276.2" cy="714" r="2.4"/>
  <path d="M270.6 716 L267 716 Q263.8 716 263.8 719.2 L263.8 722.4 Q263.8 724.6 266 724.6 L270.2 724.6"/>
  <path d="M274 718.8 L278 718.8 Q280.6 718.8 280.6 721.6 Q280.6 724.6 278 724.6 L274 724.6 Q271.2 724.6 271.2 721.6 Q271.2 718.8 274 718.8 Z"/>
  <!-- chat -->
  <path d="M376.2 708.4 Q376.2 705.6 379.4 705.6 L385.6 705.6"/>
  <path d="M375.2 711 L384 711 Q387.6 711 387.6 714.6 L387.6 720.4 Q387.6 724 384 724 L379.6 724 L376.2 726.6 L376.4 724 L375.2 724 Q371.6 724 371.6 720.4 L371.6 714.6 Q371.6 711 375.2 711 Z"/>
  <!-- heart -->
  <path d="M464.4 726 L457.6 716.4 C454.6 712 456.6 706.2 462 706.2 C465 706.2 467.2 708.4 468.4 710.3 C470.6 708.4 473.6 708.2 476.4 709.8 C480 712 480.2 717 476.6 719.6 Z"/>
  <!-- apps -->
  <path d="M810.2 715 L810.2 711.6 Q810.2 706 815.8 706 L819 706"/>
  <circle cx="826.2" cy="710.2" r="3.7"/>
  <circle cx="814.2" cy="721.9" r="3.7"/>
  <path d="M830 717.3 L830 720.6 Q830 726.1 824.4 726.1 L821.2 726.1"/>
  <!-- pause stop -->
  <rect x="904.8" y="705" width="21" height="21.8" rx="5" stroke-width="1.7"/>
  <rect x="929.4" y="705" width="21.6" height="21.8" rx="5" stroke-width="1.7"/>
  <!-- info -->
  <circle cx="1043.8" cy="716" r="11.4" stroke-width="1.6"/>
  <path d="M1042 713.2 L1044 713.2 L1044 721.4 M1041.6 721.4 L1046.4 721.4" stroke-width="1.7" stroke-linecap="butt"/>
  <!-- more -->
  <circle cx="1136" cy="716" r="11.4" stroke-width="1.6"/>
  <!-- shield -->
  <path d="M645.6 706.8 Q650.6 709.2 654.6 708.8 Q655.4 720 645.6 725.8 Q635.8 720 636.6 708.8 Q640.6 709.2 645.6 706.8 Z" stroke-width="1.6"/>
 </g>
 <g fill="#f4f4f4">
  <circle cx="375.4" cy="717.2" r="1"/><circle cx="379.5" cy="717.2" r="1"/><circle cx="383.6" cy="717.2" r="1"/>
  <rect x="912.6" y="711.6" width="2.2" height="8.4" rx="1"/><rect x="916.6" y="711.6" width="2.2" height="8.4" rx="1"/>
  <rect x="936.2" y="711.6" width="8.2" height="8.4" rx="1.5"/>
  <circle cx="1043.6" cy="710.4" r="1.2"/>
  <circle cx="1130.8" cy="716" r="1.2"/><circle cx="1136" cy="716" r="1.2"/><circle cx="1141.2" cy="716" r="1.2"/>
  <path d="M640.2 710.6 L645.6 709.2 L645.6 716 L640.2 716 Z"/>
  <path d="M645.6 716 L651.2 716 Q650.4 720.6 645.6 723.6 Z"/>
 </g>
 <!-- red slashes -->
 <path d="M41 727 L63.4 705 M133.8 727 L156 705.2" stroke="#000" stroke-width="5" stroke-linecap="round"/>
 <path d="M41 727 L63.4 705" stroke="#e8185e" stroke-width="2.4" stroke-linecap="round"/>
 <path d="M133.8 727 L156 705.2" stroke="#e8185e" stroke-width="2.4" stroke-linecap="round"/>
 <!-- chat badge -->
 <circle cx="394.2" cy="709.4" r="8.2" fill="#e8403d"/>
 <text x="394.2" y="713.6" font-family="Liberation Sans" font-weight="700" font-size="11.5" fill="#fff" text-anchor="middle">2</text>
 <!-- share -->
 <rect x="544" y="706" width="24.4" height="20.2" rx="3" fill="#0cf088"/>
 <path d="M556.2 721.8 L556.2 711.6 M552 715.4 L556.2 711 L560.4 715.4" fill="none" stroke="#000" stroke-width="2.4" stroke-linecap="round" stroke-linejoin="round"/>
 <!-- AI companion -->
 <defs><linearGradient id="sg" x1="0" y1="0" x2="1" y2="1"><stop offset="0" stop-color="#e8f6f8"/><stop offset="0.5" stop-color="#a8d2e2"/><stop offset="1" stop-color="#d8eef2"/></linearGradient></defs>
 <path d="M731.8 705.6 Q733 715 743 716.4 Q733 717.8 731.8 726.8 Q730.6 717.8 721.4 716.4 Q730.6 715 731.8 705.6 Z" fill="url(#sg)"/>
 <path d="M740.6 704.4 Q741 707.6 744.2 708 Q741 708.4 740.6 711.6 Q740.2 708.4 737 708 Q740.2 707.6 740.6 704.4 Z" fill="#c8eaee"/>
 <!-- end -->
 <path d="M1225.6 705.6 L1238.4 705.6 L1244.2 716 L1238.4 726.4 L1225.6 726.4 L1219.8 716 Z" fill="none" stroke="#d91f50" stroke-width="1.6" stroke-linejoin="round"/>
 <path d="M1228.2 712.2 L1235.8 719.8 M1235.8 712.2 L1228.2 719.8" stroke="#fff" stroke-width="2.6" stroke-linecap="round"/>
</svg>
<div class="a" style="left:288.5px;top:709px;font-size:12px;line-height:14px;color:#b9b9b9">95</div>
<div class="lbl" style="left:-8px;width:120px">Audio</div>
<div class="lbl" style="left:85.4px;width:120px">Video</div>
<div class="lbl" style="left:212.4px;width:120px">Participants</div>
<div class="lbl" style="left:322.7px;width:120px">Chat</div>
<div class="lbl" style="left:407.3px;width:120px">React</div>
<div class="lbl" style="left:496.2px;width:120px">Share</div>
<div class="lbl" style="left:585.8px;width:120px">Host tools</div>
<div class="lbl" style="left:672.9px;width:120px">AI Companion</div>
<div class="lbl" style="left:760.4px;width:120px">Apps</div>
<div class="lbl" style="left:867.4px;width:120px;color:#b4b4b4">Pause/stop recording</div>
<div class="lbl" style="left:984.6px;width:120px">Meeting info</div>
<div class="lbl" style="left:1076px;width:120px">More</div>
<div class="lbl" style="left:1171.9px;width:120px">End</div>
<div id="taskbar" class="a"></div>
<svg class="a" style="left:0;top:752px" width="1280" height="48" viewBox="0 752 1280 48">
 <defs>
  <linearGradient id="cl" x1="0" y1="0" x2="0" y2="1"><stop offset="0" stop-color="#b8d6f6"/><stop offset="1" stop-color="#7cb0ea"/></linearGradient>
  <linearGradient id="win" x1="0" y1="0" x2="1" y2="1"><stop offset="0" stop-color="#3cc4f4"/><stop offset="1" stop-color="#0a72d8"/></linearGradient>
  <linearGradient id="fold" x1="0" y1="0" x2="0" y2="1"><stop offset="0" stop-color="#ffd45a"/><stop offset="1" stop-color="#f4b82a"/></linearGradient>
  <linearGradient id="edge" x1="0" y1="0" x2="1" y2="0.6"><stop offset="0" stop-color="#1a8ad8"/><stop offset="0.55" stop-color="#2ec0b0"/><stop offset="1" stop-color="#6ad65a"/></linearGradient>
  <linearGradient id="canva" x1="0" y1="0" x2="0.3" y2="1"><stop offset="0" stop-color="#22b8d8"/><stop offset="0.55" stop-color="#4a6ee0"/><stop offset="1" stop-color="#8a3ae8"/></linearGradient>
  <linearGradient id="teams" x1="0" y1="0" x2="1" y2="1"><stop offset="0" stop-color="#8a8ff0"/><stop offset="1" stop-color="#5a5ad0"/></linearGradient>
  <linearGradient id="zm" x1="0" y1="0" x2="0" y2="1"><stop offset="0" stop-color="#2a78f4"/><stop offset="1" stop-color="#0b4fd8"/></linearGradient>
  <linearGradient id="out" x1="0" y1="0" x2="1" y2="1"><stop offset="0" stop-color="#5ac8f8"/><stop offset="1" stop-color="#1a6ad8"/></linearGradient>
 </defs>
 <!-- weather -->
 <path d="M22.5 787 Q19.5 787 20 783.4 Q20.6 780.6 24 780.2 Q25.6 774.6 31.4 774.4 Q36.2 774.6 38 778.8 Q43.8 778.8 44 783 Q44 787 40.4 787 Z" fill="url(#cl)"/>
 <circle cx="39.2" cy="766.8" r="8" fill="#c4261c"/>
 <text x="39.2" y="771.2" font-family="Liberation Sans" font-weight="700" font-size="11" fill="#fff" text-anchor="middle">5</text>
 <!-- windows -->
 <rect x="349.4" y="765" width="11.2" height="11" rx="0.8" fill="url(#win)"/>
 <rect x="361.6" y="765" width="11" height="11" rx="0.8" fill="url(#win)"/>
 <rect x="349.4" y="777" width="11.2" height="10.8" rx="0.8" fill="url(#win)"/>
 <rect x="361.6" y="777" width="11" height="10.8" rx="0.8" fill="url(#win)"/>
 <!-- search -->
 <circle cx="404.2" cy="774" r="7.6" fill="none" stroke="#1c1c1c" stroke-width="2.2"/>
 <path d="M409.8 779.6 L416 786" stroke="#1c1c1c" stroke-width="2.4" stroke-linecap="round"/>
 <!-- task view -->
 <rect x="444.6" y="765" width="17.4" height="15" rx="1" fill="#f6f6f6"/>
 <rect x="438.2" y="771" width="17.6" height="16.4" rx="1.2" fill="#262626"/>
 <rect x="444.6" y="771" width="11.2" height="9" fill="#b8b8b8"/>
 <!-- file explorer -->
 <path d="M482 766.6 Q482 765 483.6 765 L489.6 765 L491.6 767 L504.4 767 Q506 767 506 768.6 L506 786 Q506 787.6 504.4 787.6 L483.6 787.6 Q482 787.6 482 786 Z" fill="url(#fold)"/>
 <rect x="482" y="765" width="9.6" height="3" rx="1" fill="#e0a020"/>
 <path d="M486 787.6 L486 783 Q486 780 489 780 L499 780 Q502 780 502 783 L502 787.6 Z" fill="#1a78d0"/>
 <rect x="488.4" y="783.2" width="11.2" height="1.2" fill="#0d4a90"/>
 <!-- edge -->
 <circle cx="538" cy="776" r="12" fill="url(#edge)"/>
 <path d="M526.2 778 Q527 770 534 768.6 Q541 767.6 544.6 772 Q538.6 770.4 534.6 773.2 Q530 777 531.6 783.4 Q533.4 787.4 537 788 Q528 787.6 526.2 778 Z" fill="#1b63b8"/>
 <path d="M530 777 Q531 771.6 536.4 771 Q541 770.8 543 773.6 Q538.6 773 536 775.6 Q533.6 778.6 535.6 783 Q538.6 786.6 543.6 786.2 Q539 788.4 535 787.6 Q530.4 784 530 777 Z" fill="#2a8ee0"/>
 <circle cx="542.6" cy="776.2" r="3.3" fill="#dcdcdc"/>
 <path d="M546 777.6 Q549.6 777.4 549.8 779.6 Q547 786.4 539 788 Q544 785 545 780.4 Z" fill="#1e66c0"/>
 <rect x="526.4" y="781.4" width="10.6" height="6.6" rx="0.8" fill="#c7781a"/>
 <rect x="529.4" y="780" width="4.6" height="1.6" rx="0.5" fill="none" stroke="#8a4a0a" stroke-width="0.6"/>
 <rect x="526.4" y="783" width="10.6" height="0.8" fill="#8a4a0a"/>
 <rect x="531" y="782.6" width="1.6" height="1.8" fill="#f4c040"/>
 <!-- store -->
 <path d="M570 768 L594 768 L594 785.6 Q594 788 591.6 788 L572.4 788 Q570 788 570 785.6 Z" fill="#1d4d8a"/>
 <path d="M576 768 L576 766 Q576 764.4 577.6 764.4 L586.4 764.4 Q588 764.4 588 766 L588 768" fill="none" stroke="#5ab4ee" stroke-width="1.2"/>
 <rect x="577" y="772.6" width="4.6" height="4.4" fill="#f05030"/>
 <rect x="582.6" y="772.6" width="4.6" height="4.4" fill="#7ab828"/>
 <rect x="577" y="778" width="4.6" height="4.4" fill="#10a4ee"/>
 <rect x="582.6" y="778" width="4.6" height="4.4" fill="#ffb800"/>
 <!-- outlook -->
 <path d="M618 772 L630.4 765.4 L638 770.4 L638 785 Q638 787 636 787 L620 787 Q618 787 618 785 Z" fill="url(#out)"/>
 <path d="M621.6 770.8 L632 766.2 L637.6 770.6 L627 776 Z" fill="#3a5ad8"/>
 <rect x="613.6" y="775.4" width="9.6" height="9" rx="1.4" fill="#1a5ac8"/>
 <circle cx="618.4" cy="779.9" r="2.4" fill="none" stroke="#fff" stroke-width="1.3"/>
 <!-- whatsapp -->
 <path d="M670 766 A10.8 10.8 0 1 1 664.6 784.4 L659 786 L660.8 780.6 A10.8 10.8 0 0 1 670 766 Z" fill="none" stroke="#218a55" stroke-width="1.7" stroke-linejoin="round"/>
 <path d="M666 771.6 Q665 772.6 665.6 774.6 Q667.4 779 672 781 Q674 781.6 675 780.4 L675.4 779 L673 777.8 L672 778.8 Q669.6 777.6 668.4 775.4 L669.4 774.4 L668.2 771.8 Z" fill="#218a55"/>
 <!-- sticky notes -->
 <rect x="703.6" y="765.4" width="21.4" height="21.4" rx="1" fill="#383838"/>
 <path d="M725 775.6 L725 786.8 L713.8 786.8 Z" fill="#ffd20a"/>
 <!-- chrome -->
 <circle cx="758" cy="776" r="12" fill="#2da14a"/>
 <path d="M758 776 L747.6 770 A12 12 0 0 1 768.4 770 Z" fill="#dc3a2a"/>
 <path d="M758 776 L768.4 770 A12 12 0 0 1 758 788 Z" fill="#f8c022"/>
 <circle cx="758" cy="776" r="5.4" fill="#fff"/>
 <circle cx="758" cy="776" r="4.2" fill="#2a72e4"/>
 <!-- canva -->
 <circle cx="802" cy="776" r="12" fill="url(#canva)"/>
 <text x="802" y="779.4" font-family="Liberation Serif" font-style="italic" font-size="8.6" fill="#fff" text-anchor="middle">Canva</text>
 <!-- teams -->
 <circle cx="842.8" cy="767.6" r="3.2" fill="#8a8ef0"/>
 <path d="M840 771.6 L853.4 771.6 Q856.4 771.6 856.4 774.6 L856.4 782 Q856.4 786.8 851 786.8 L847 786.8 Q840 786.8 840 780 Z" fill="url(#teams)"/>
 <rect x="833.2" y="773.4" width="11.6" height="11.4" rx="1.2" fill="#4a4ac0"/>
 <text x="839" y="782.8" font-family="Liberation Sans" font-weight="700" font-size="9" fill="#fff" text-anchor="middle">T</text>
 <circle cx="855.6" cy="767.4" r="7.4" fill="#1faa2e"/>
 <path d="M852.6 767.6 L855 770 L859 765.4" fill="none" stroke="#fff" stroke-width="1.5" stroke-linecap="round" stroke-linejoin="round"/>
 <!-- zoom active -->
 <rect x="903" y="758" width="6" height="37.4" rx="2" fill="#e8e8e8"/>
 <rect x="872" y="757.8" width="33.4" height="37.6" rx="3" fill="#f0f0f0"/>
 <circle cx="890.4" cy="776" r="12.4" fill="url(#zm)"/>
 <text x="890.4" y="778.4" font-family="Liberation Sans" font-weight="700" font-size="6.4" fill="#fff" text-anchor="middle" letter-spacing="-0.2">zoom</text>
 <rect x="882" y="792.6" width="16" height="3" rx="1.5" fill="#2a8c9c"/>
 <!-- dots -->
 <g fill="#878787">
  <rect x="491.8" y="792.4" width="5.6" height="3" rx="1.5"/>
  <rect x="535.8" y="792.4" width="5.6" height="3" rx="1.5"/>
  <rect x="623.8" y="792.4" width="5.6" height="3" rx="1.5"/>
  <rect x="667.6" y="792.4" width="5.6" height="3" rx="1.5"/>
  <rect x="711.6" y="792.4" width="5.6" height="3" rx="1.5"/>
  <rect x="755.4" y="792.4" width="5.6" height="3" rx="1.5"/>
  <rect x="799.4" y="792.4" width="5.6" height="3" rx="1.5"/>
  <rect x="843.6" y="792.4" width="5.6" height="3" rx="1.5"/>
 </g>
 <!-- tray -->
 <path d="M981.4 779 L986.4 774 L991.4 779" fill="none" stroke="#1e1e1e" stroke-width="1.4"/>
 <path d="M1012 781 Q1009.4 781 1009.6 778.4 Q1010 776 1012.6 776 Q1013.6 772 1017.6 772 Q1020.6 772.2 1021.8 775 Q1025.8 775 1026 778 Q1026 781 1023.2 781 Z" fill="#1d7ad8"/>
 <path d="M1047.6 773 A2.4 2.4 0 0 1 1052.4 773 L1052.4 776.8 A2.4 2.4 0 0 1 1047.6 776.8 Z M1045 776 A5 5 0 0 0 1055 776 M1050 781 L1050 784" fill="none" stroke="#3a6a8a" stroke-width="1.2"/>
 <path d="M1118.6 774.4 Q1126 768 1133.4 774.4 M1120.8 776.8 Q1126 772.4 1131.2 776.8 M1123 779 Q1126 776.8 1129 779" fill="none" stroke="#1e1e1e" stroke-width="1.3" stroke-linecap="round"/>
 <circle cx="1126" cy="780.8" r="1.1" fill="#1e1e1e"/>
 <path d="M1142.6 773.6 L1145.6 773.6 L1149.8 770.6 L1149.8 781 L1145.6 778 L1142.6 778 Z" fill="none" stroke="#1e1e1e" stroke-width="1.2" stroke-linejoin="round"/>
 <path d="M1152 773.4 Q1153.6 775.8 1152 778.2 M1154.4 771.6 Q1157.4 775.8 1154.4 780" fill="none" stroke="#1e1e1e" stroke-width="1.2" stroke-linecap="round"/>
 <rect x="1166.4" y="772.6" width="14.6" height="8.4" rx="1.4" fill="#1e1e1e"/>
 <rect x="1181.2" y="775" width="1.6" height="3.6" fill="#1e1e1e"/>
 <path d="M1168 769 L1168 772.6 M1170 768.8 L1168.6 772" stroke="#1e1e1e" stroke-width="1.2"/>
</svg>
<div class="a" style="left:1075px;top:769px;font-size:12.4px;line-height:14px;color:#1e1e1e;letter-spacing:-0.6px">ENG</div>
<div class="a" style="left:1180px;top:760px;width:81px;text-align:right;font-size:12.3px;line-height:16px;color:#1e1e1e;letter-spacing:0.25px"><span style="letter-spacing:-0.4px;margin-right:-0.3px">08.58</span><br><span style="margin-right:-0.3px">12/11/2025</span></div>
</body>
</html>
